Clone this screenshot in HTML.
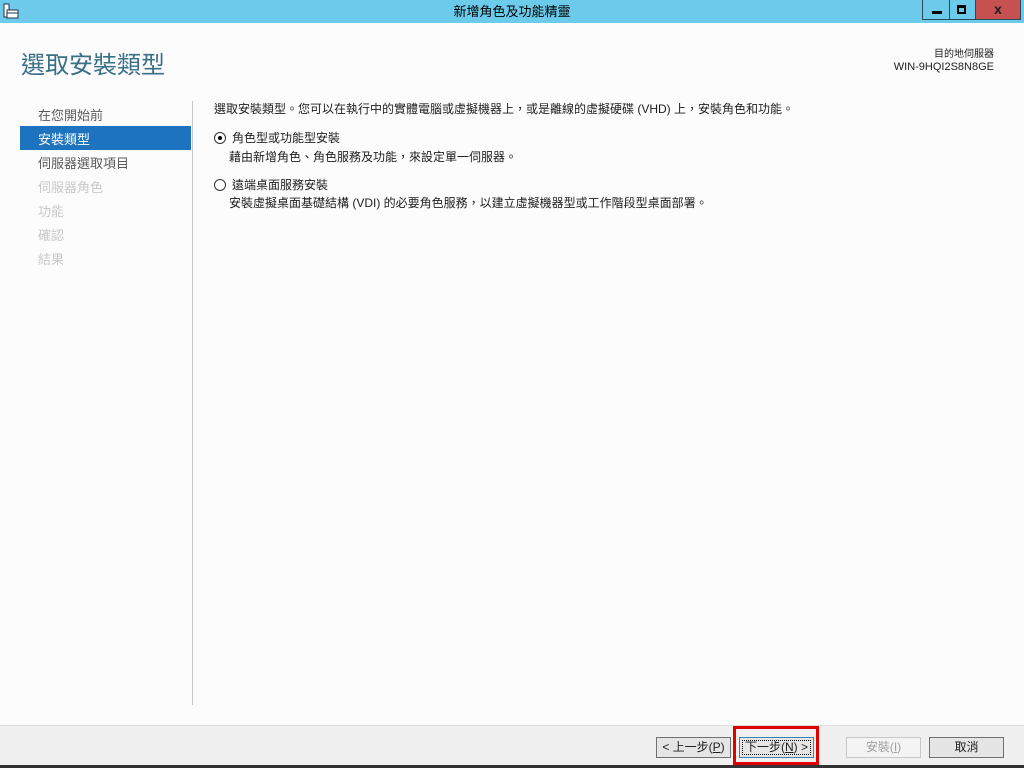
<!DOCTYPE html>
<html><head><meta charset="utf-8"><style>
*{margin:0;padding:0;box-sizing:border-box}
body{width:1024px;height:768px;overflow:hidden;background:#fcfcfc;font-family:"Liberation Sans","Noto Sans CJK TC",sans-serif;position:relative;font-size:12px;color:#1e1e1e}
.tb{position:absolute;left:0;top:0;width:1024px;height:23px;background:#6ccbea}
.tb .t{position:absolute;left:0;width:1024px;top:1px;text-align:center;font-size:13px;color:#000}
.btn{position:absolute;top:0;height:20px;border:1px solid #2a4a5a;border-top:none}
.a{position:absolute;white-space:nowrap}
.nav{position:absolute;left:38px;font-size:13px;color:#5a5a5a}
.dis{color:#c8c8c8}
.fb{position:absolute;left:0;top:725px;width:1024px;height:43px;background:#f0f0f0;border-top:1px solid #dcdcdc}
.b{position:absolute;top:737px;height:21px;border:1px solid #707070;background:#e5e5e5;font-size:12px;text-align:center;line-height:19px}
.r{position:absolute;width:12px;height:12px;border:1px solid #333;border-radius:50%;background:#fff}
</style></head><body>
<div class="tb">
<svg style="position:absolute;left:3px;top:3px" width="16" height="16"><rect x="1" y="1" width="5" height="13" fill="#fff" stroke="#235" stroke-width="1"/><rect x="4" y="7" width="11" height="8" fill="#fff" stroke="#235"/><line x1="4" y1="10" x2="15" y2="10" stroke="#235"/></svg>
<div class="t">新增角色及功能精靈</div>
<div class="btn" style="left:922px;width:28px"><div style="position:absolute;left:9px;top:11px;width:10px;height:3px;background:#000"></div></div>
<div class="btn" style="left:949px;width:27px;border-left:none"><div style="position:absolute;left:8px;top:5px;width:9px;height:9px;border:2px solid #000;border-top-width:3px"></div></div>
<div class="btn" style="left:975px;width:46px;background:#c75050"><div style="position:absolute;left:0;width:44px;top:1px;text-align:center;font-weight:bold;font-size:14px">x</div></div>
</div>
<div class="a" style="left:21px;top:45px;font-size:24px;color:#3a6f88">選取安裝類型</div>
<div class="a" style="right:30px;top:48px;font-size:10px;text-align:right;line-height:13px">目的地伺服器<br><span style="font-size:11px">WIN-9HQI2S8N8GE</span></div>
<div style="position:absolute;left:192px;top:101px;width:1px;height:604px;background:#c8c8c8"></div>
<div class="nav" style="top:105px">在您開始前</div>
<div style="position:absolute;left:20px;top:126px;width:171px;height:24px;background:#1e73be"></div>
<div class="nav" style="top:129px;color:#fff">安裝類型</div>
<div class="nav" style="top:153px">伺服器選取項目</div>
<div class="nav dis" style="top:177px">伺服器角色</div>
<div class="nav dis" style="top:201px">功能</div>
<div class="nav dis" style="top:225px">確認</div>
<div class="nav dis" style="top:249px">結果</div>
<div class="a" style="left:214px;top:100px">選取安裝類型。您可以在執行中的實體電腦或虛擬機器上，或是離線的虛擬硬碟 (VHD) 上，安裝角色和功能。</div>
<div class="r" style="left:214px;top:132px"><div style="position:absolute;left:3px;top:3px;width:4px;height:4px;border-radius:50%;background:#000"></div></div>
<div class="a" style="left:232px;top:129px">角色型或功能型安裝</div>
<div class="a" style="left:229px;top:148px">藉由新增角色、角色服務及功能，來設定單一伺服器。</div>
<div class="r" style="left:214px;top:179px"></div>
<div class="a" style="left:232px;top:176px">遠端桌面服務安裝</div>
<div class="a" style="left:229px;top:194px">安裝虛擬桌面基礎結構 (VDI) 的必要角色服務，以建立虛擬機器型或工作階段型桌面部署。</div>
<div class="fb"></div>
<div class="b" style="left:656px;width:75px">&lt; 上一步(<u>P</u>)</div>
<div class="b" style="left:739px;width:75px;border-color:#3c7fb1"><div style="position:absolute;inset:2px;border:1px dotted #000;line-height:13px">下一步(<u>N</u>) &gt;</div></div>
<div style="position:absolute;left:733px;top:726px;width:86px;height:39px;border:3px solid #e00000"></div>
<div class="b" style="left:846px;width:75px;color:#a0a0a0;border-color:#c8c8c8;background:#f4f4f4">安裝(<u>I</u>)</div>
<div class="b" style="left:929px;width:75px">取消</div>
<div style="position:absolute;left:0;top:765px;width:1024px;height:3px;background:#333"></div>
</body></html>
